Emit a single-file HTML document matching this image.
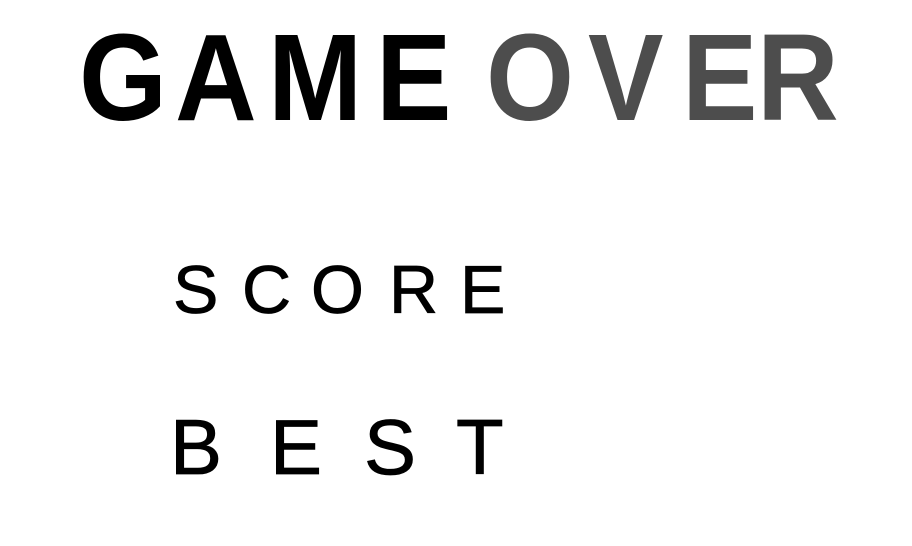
<!DOCTYPE html>
<html><head><meta charset="utf-8"><style>
html,body{margin:0;padding:0;background:#fff;width:912px;height:546px;overflow:hidden;position:relative}
span{position:absolute;font-family:"Liberation Sans",sans-serif;line-height:1;white-space:nowrap}
.t{font-size:123px;font-weight:bold;top:17px;color:#000;transform:scaleX(0.92);transform-origin:0 0}
.g{color:#4d4d4d}
.s{font-size:68px;top:256px;color:#000;-webkit-text-stroke:0.8px #000}
.b{font-size:78px;top:408px;color:#000;-webkit-text-stroke:0.8px #000}
</style></head><body>
<span class="t" style="left:79px">G</span>
<span class="t" style="left:175px">A</span>
<span class="t" style="left:268px">M</span>
<span class="t" style="left:376px">E</span>
<span class="t g" style="left:486px">O</span>
<span class="t g" style="left:588px">V</span>
<span class="t g" style="left:682px">E</span>
<span class="t g" style="left:757px">R</span>

<span class="s" style="left:173px">S</span>
<span class="s" style="left:242px">C</span>
<span class="s" style="left:311px">O</span>
<span class="s" style="left:389px">R</span>
<span class="s" style="left:460px">E</span>

<span class="b" style="left:170px">B</span>
<span class="b" style="left:270px">E</span>
<span class="b" style="left:364px">S</span>
<span class="b" style="left:456px">T</span>
</body></html>
